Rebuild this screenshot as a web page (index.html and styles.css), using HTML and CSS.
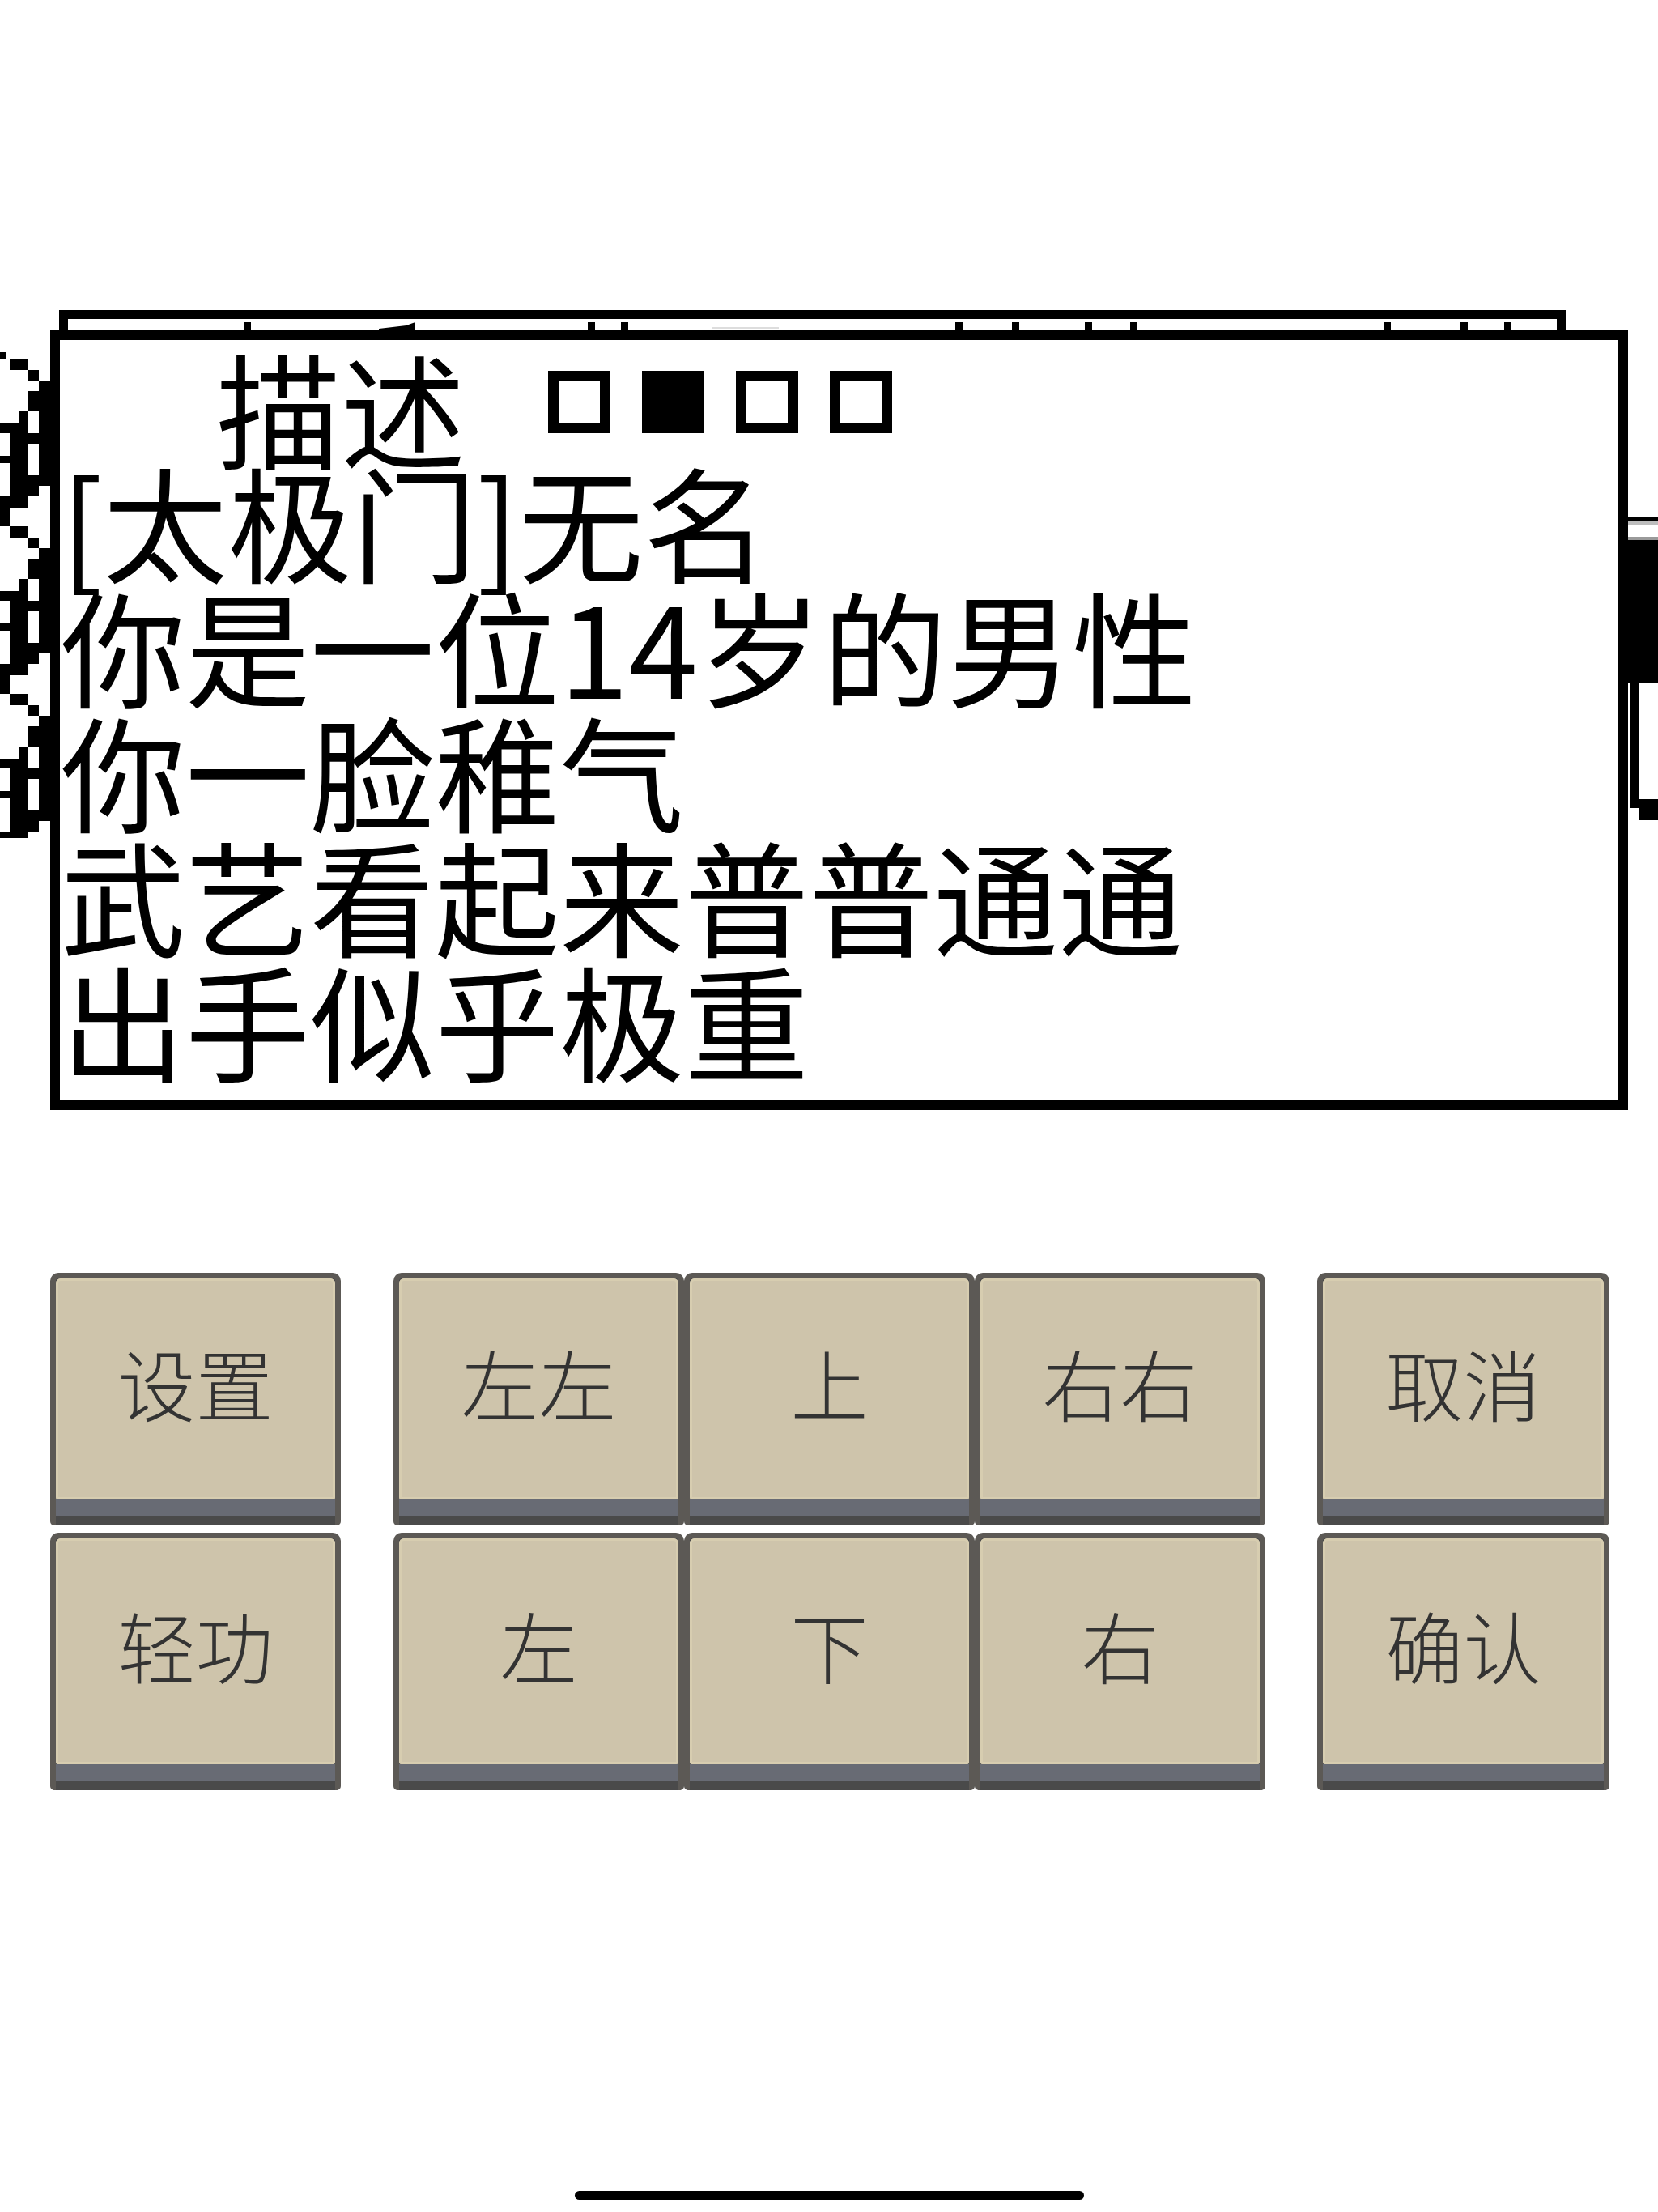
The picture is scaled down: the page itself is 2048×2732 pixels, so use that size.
FILE: index.html
```html
<!DOCTYPE html>
<html lang="zh-CN">
<head>
<meta charset="utf-8">
<title>描述</title>
<link rel="stylesheet" href="styles.css">
</head>
<body>
<div class="screen">
  <div class="stack">
    <div class="back">
      <svg class="ticks" width="1839" height="14" viewBox="0 0 1839 14">
        <g fill="#000">
          <rect x="217" y="4" width="9" height="10"/>
          <rect x="642" y="4" width="9" height="10"/>
          <rect x="683" y="4" width="9" height="10"/>
          <rect x="1096" y="4" width="9" height="10"/>
          <rect x="1166" y="4" width="9" height="10"/>
          <rect x="1256" y="4" width="9" height="10"/>
          <rect x="1312" y="4" width="9" height="10"/>
          <rect x="1625" y="4" width="9" height="10"/>
          <rect x="1720" y="4" width="9" height="10"/>
          <rect x="1774" y="4" width="9" height="10"/>
          <polygon points="384,12 418,8 429,4 429,14 384,14"/>
        </g>
        <rect x="796" y="10" width="82" height="2" fill="#ddd"/>
      </svg>
    </div>
    <svg class="pattern" width="62" height="600" viewBox="0 0 62 600">
      <defs>
        <g id="unit" fill="#000">
          <rect x="12" y="0" width="22" height="14"/>
          <rect x="35" y="14" width="13" height="13"/>
          <rect x="48" y="27" width="14" height="13"/>
          <rect x="35" y="40" width="27" height="25"/>
          <rect x="23" y="65" width="12" height="15"/>
          <rect x="48" y="65" width="14" height="15"/>
          <rect x="0" y="80" width="35" height="12"/>
          <rect x="48" y="80" width="14" height="12"/>
          <rect x="12" y="92" width="50" height="13"/>
          <rect x="12" y="105" width="23" height="39"/>
          <rect x="48" y="105" width="14" height="39"/>
          <rect x="0" y="120" width="12" height="9"/>
          <rect x="12" y="144" width="50" height="13"/>
          <rect x="12" y="157" width="36" height="13"/>
          <rect x="0" y="170" width="35" height="14"/>
          <rect x="0" y="184" width="12" height="23"/>
        </g>
      </defs>
      <rect x="0" y="0" width="7" height="8" fill="#000"/>
      <use href="#unit" x="0" y="8"/>
      <use href="#unit" x="0" y="215"/>
      <use href="#unit" x="0" y="422"/>
    </svg>
    <div class="front">
      <div class="title-row">
        <div class="title">描述</div>
        <div class="dots">
          <span class="dot"></span>
          <span class="dot on"></span>
          <span class="dot"></span>
          <span class="dot"></span>
        </div>
      </div>
      <div class="lines">
        <div class="line">[太极门]无名</div>
        <div class="line">你是一位14岁的男性</div>
        <div class="line">你一脸稚气</div>
        <div class="line">武艺看起来普普通通</div>
        <div class="line">出手似乎极重</div>
      </div>
    </div>
    <svg class="side" width="37" height="374" viewBox="0 0 37 374">
      <rect x="0" y="0" width="37" height="4" fill="#000"/>
      <rect x="0" y="4" width="37" height="6" fill="#bdbdbd"/>
      <rect x="0" y="24" width="37" height="4" fill="#9a9a9a"/>
      <rect x="0" y="28" width="37" height="176" fill="#000"/>
      <rect x="3" y="204" width="11" height="144" fill="#000"/>
      <rect x="3" y="348" width="34" height="11" fill="#000"/>
      <rect x="14" y="359" width="23" height="15" fill="#000"/>
    </svg>
  </div>

  <div class="keys">
    <div class="group g1">
      <div class="key"><div class="face">设置</div><div class="band"></div></div>
      <div class="key"><div class="face">轻功</div><div class="band"></div></div>
    </div>
    <div class="group g2">
      <div class="key"><div class="face">左左</div><div class="band"></div></div>
      <div class="key"><div class="face">上</div><div class="band"></div></div>
      <div class="key"><div class="face">右右</div><div class="band"></div></div>
      <div class="key"><div class="face">左</div><div class="band"></div></div>
      <div class="key"><div class="face">下</div><div class="band"></div></div>
      <div class="key"><div class="face">右</div><div class="band"></div></div>
    </div>
    <div class="group g3">
      <div class="key"><div class="face">取消</div><div class="band"></div></div>
      <div class="key"><div class="face">确认</div><div class="band"></div></div>
    </div>
  </div>

  <div class="home"></div>
</div>
</body>
</html>
```

FILE: styles.css
```css
html, body {
  margin: 0;
  padding: 0;
  background: #fff;
}

body {
  font-family: "Noto Sans CJK SC", "Noto Sans", sans-serif;
}

.screen {
  width: 2048px;
  height: 2732px;
  overflow: hidden;
  background: #fff;
}

/* ---- stacked dialog panels ---- */
.stack {
  display: grid;
  margin-top: 383px;
}

.stack > * {
  grid-area: 1 / 1;
  justify-self: start;
  align-self: start;
}

.back {
  margin-left: 73px;
  width: 1861px;
  height: 900px;
  box-sizing: border-box;
  border: 11px solid #000;
  background: #fff;
}

.ticks {
  display: block;
}

.pattern {
  display: block;
  margin-top: 52px;
}

.side {
  display: block;
  margin-top: 256px;
  margin-left: 2011px;
}

.front {
  position: relative;
  z-index: 1;
  margin-top: 25px;
  margin-left: 62px;
  width: 1949px;
  height: 963px;
  box-sizing: border-box;
  border: 12px solid #000;
  background: #fff;
  color: #000;
  font-size: 154px;
  line-height: 154px;
  font-weight: 400;
}

.title-row {
  display: flex;
  height: 145px;
}

.title {
  margin: 5px 0 0 193px;
  height: 154px;
  white-space: nowrap;
}

.dots {
  display: flex;
  gap: 39px;
  margin: 38px 0 0 102px;
}

.dot {
  display: block;
  width: 77px;
  height: 77px;
  box-sizing: border-box;
  border: 13px solid #000;
  background: #fff;
}

.dot.on {
  background: #000;
}

.lines {
  padding-left: 1px;
}

.line {
  height: 154px;
  white-space: nowrap;
}

/* ---- keypad ---- */
.keys {
  display: flex;
  margin: 201px 0 0 62px;
}

.group {
  display: grid;
  grid-template-rows: 312px 318px;
  row-gap: 9px;
}

.g1 {
  grid-template-columns: 359px;
}

.g2 {
  grid-template-columns: repeat(3, 359px);
  margin-left: 65px;
}

.g3 {
  grid-template-columns: 361px;
  margin-left: 64px;
}

.key {
  display: flex;
  flex-direction: column;
  box-sizing: border-box;
  border: 7px solid #5c5955;
  border-bottom: none;
  border-radius: 10px 10px 5px 5px;
  background: #4a4a4a;
  padding-bottom: 11px;
}

.face {
  flex: 1;
  display: flex;
  align-items: center;
  justify-content: center;
  background: #cec4ab;
  border-radius: 6px 6px 3px 3px;
  box-shadow: inset 0 0 0 3px #d7cdb0;
  color: #333;
  font-size: 96px;
  font-weight: 300;
  line-height: 1;
  padding-bottom: 18px;
}

.band {
  height: 21px;
  background: #686b74;
}

/* ---- home indicator ---- */
.home {
  width: 629px;
  height: 11px;
  margin: 495px auto 0;
  border-radius: 6px;
  background: #000;
}
```
